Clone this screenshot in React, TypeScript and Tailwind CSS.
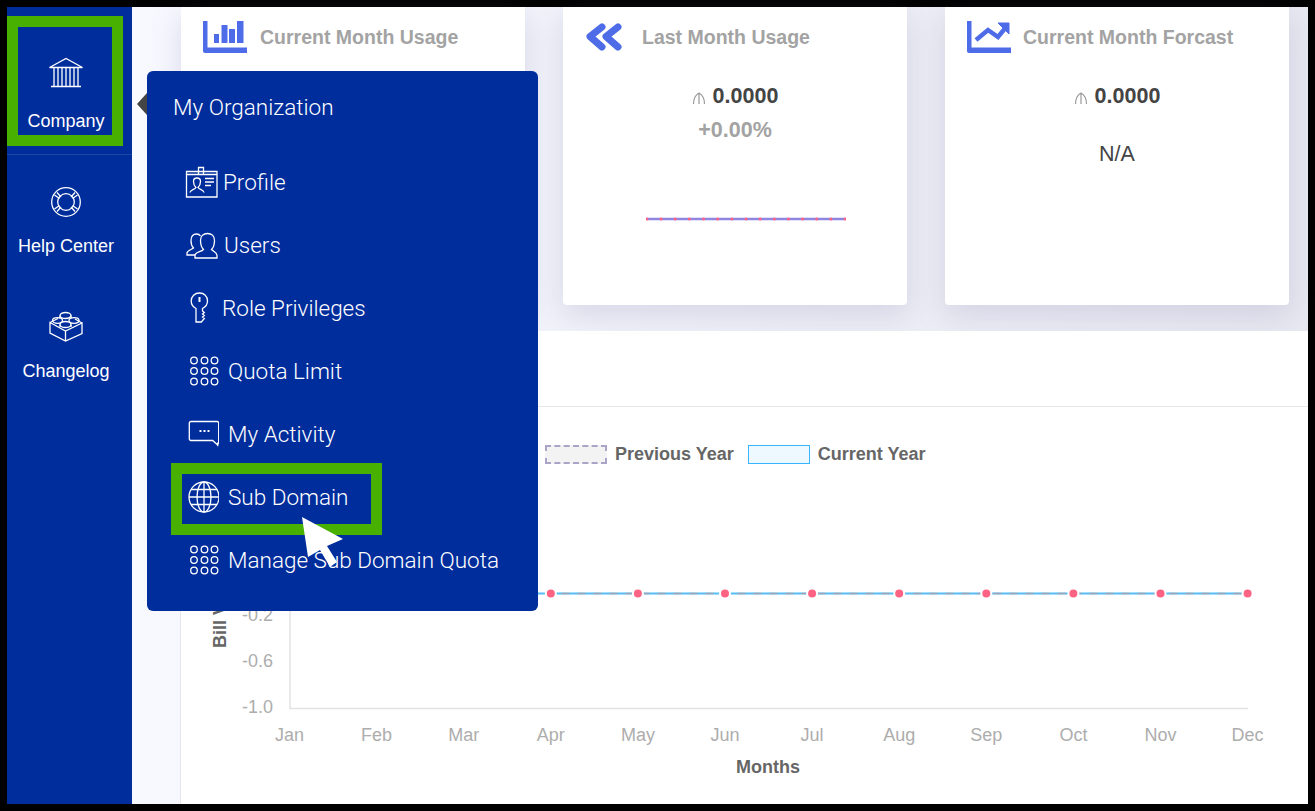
import React from 'react';

const MONTHS = ['Jan', 'Feb', 'Mar', 'Apr', 'May', 'Jun', 'Jul', 'Aug', 'Sep', 'Oct', 'Nov', 'Dec'];
const monthX = (i: number) => 289.5 + i * 87.1;

const stroke = { fill: 'none', stroke: 'white', strokeWidth: 1.3 };

const BankIcon = () => (
  <svg width="36" height="32" viewBox="0 0 36 32" {...stroke}>
    <path d="M1.500 10.500 18 1.500l16.500 9H1.500Z" />
    <path d="M3 29.500h30M6 11v18M10 11v18M14 11v18M18 11v18M22 11v18M26 11v18M30 11v18" />
  </svg>
);

const RingIcon = () => (
  <svg width="32" height="32" viewBox="0 0 32 32" {...stroke}>
    <circle cx="16" cy="16" r="14.3" />
    <circle cx="16" cy="16" r="8.3" />
    <path d="M7 6.500 11 11M25 6.500 21 11M7 25.500 11 21M25 25.500 21 21M4.500 9l5 3.500M27.500 9l-5 3.500M4.500 23l5-3.500M27.500 23l-5-3.500" />
  </svg>
);

const BrickIcon = () => (
  <svg width="36" height="32" viewBox="0 0 36 32" {...stroke}>
    <path d="M2 12.500 17.500 21 34 13v10.500L17.500 31 2 23V12.500ZM17.500 21v10" />
    <path d="M2 12.500 10 8.500M34 13l-7-4" />
    <ellipse cx="17.500" cy="5.500" rx="5.500" ry="3" />
    <path d="M12 5.500v3M23 5.500v3" />
    <ellipse cx="9.500" cy="10.500" rx="5" ry="2.800" />
    <ellipse cx="26" cy="10.500" rx="5" ry="2.800" />
    <ellipse cx="17.500" cy="14.500" rx="5.500" ry="3" />
    <path d="M12 14.500v2.500M23 14.500v2.500" />
  </svg>
);

const ProfileIcon = () => (
  <svg width="34" height="34" viewBox="0 0 34 34" {...stroke}>
    <path d="M1.500 6.500h30.500v25.500H1.500V6.500ZM1.500 9.500h30.500" />
    <path d="M13.500 9.500V2.500h5v7" />
    <path d="M5 27.500c.5-3 5-3 6-5-2-2-2.500-3.500-2.500-6 0-2.300 1.500-3.500 3.500-3.500s3.500 1.200 3.500 3.500c0 2.500-.5 4-2.500 6 1 2 5.500 2 6 5" />
    <path d="M20 13.500h9M20 17h9M20 20.500h6" />
  </svg>
);

const UsersIcon = () => (
  <svg width="34" height="34" viewBox="0 0 34 34" {...stroke}>
    <path d="M10 30v-2.500c0-3.500 6-3.500 8.500-6-2.500-2.500-3-5.500-3-9 0-4.500 3-7 7-7s7 2.500 7 7c0 3.500-.5 6.500-3 9 2.500 2.500 5.500 2.500 5.500 6V30H10Z" />
    <path d="M10 27H2v-2c0-2.500 4-3 6.500-5-2-2-2.500-4.500-2.500-7.500 0-4 2-6.500 5.500-6.500 1.500 0 3 .5 4 2" />
  </svg>
);

const KeyIcon = () => (
  <svg width="34" height="34" viewBox="0 0 34 34" {...stroke}>
    <path d="M11 17.500C7.800 15.800 6.200 13 6.200 10 6.200 5.300 9.800 2 14.500 2s8 3.300 8 8c0 3.200-1.700 5.800-5 7.500v2.500l1.800 1.500-1.800 1.500 1.800 1.500-1.800 1.500 1.800 1.500-3 3.500H11V17.500Z" />
    <path d="M14.500 6v5" strokeWidth="2" />
  </svg>
);

const DotsIcon = () => (
  <svg width="34" height="34" viewBox="0 0 34 34" {...stroke}>
    {[9, 19.5, 30].map(y =>
      [9, 19.5, 29.5].map(x => <circle key={`${x}-${y}`} cx={x} cy={y - 2.5} r="3.300" />)
    )}
  </svg>
);

const ChatIcon = () => (
  <svg width="34" height="34" viewBox="0 0 34 34" {...stroke}>
    <path d="M6 4.500h26c1 0 1.700.7 1.700 1.700v19.800l-1 1.500v-2 2.500l-5-4.500H6c-1 0-1.700-.7-1.700-1.700V6.200C4.300 5.200 5 4.500 6 4.500Z" />
    <path d="M14.500 14h2M18.500 14h2M22.500 14h2" strokeWidth="1.800" />
  </svg>
);

const GlobeIcon = () => (
  <svg width="34" height="34" viewBox="0 0 34 34" {...stroke}>
    <circle cx="19" cy="17" r="15" />
    <ellipse cx="19" cy="17" rx="7" ry="15" />
    <path d="M19 2v30M4 17h30M6 9.500h26M6 24.500h26" />
  </svg>
);

const BarsIcon = () => (
  <svg width="44" height="34" viewBox="0 0 44 34" fill="#4f6ce8">
    <path d="M0 1h4.500v26.500H44V33H2c-1.200 0-2-.8-2-2V1Z" />
    <rect x="11" y="14" width="5" height="9" />
    <rect x="18.500" y="5" width="6" height="18" />
    <rect x="26" y="9" width="6" height="14" />
    <rect x="34" y="1" width="6.500" height="22" />
  </svg>
);

const ChevronsIcon = () => (
  <svg width="38" height="30" viewBox="0 0 38 30" fill="none" stroke="#4f6ce8" strokeWidth="7" strokeLinecap="round" strokeLinejoin="round">
    <path d="M17 5 5 14.500 17 25M33 5 21 14.500 33 25" />
  </svg>
);

const TrendIcon = () => (
  <svg width="44" height="34" viewBox="0 0 44 34" fill="none">
    <path d="M0 1h4.500v26.500H44V33H2c-1.200 0-2-.8-2-2V1Z" fill="#4f6ce8" />
    <path d="M9 20 21 10l10 7 9-11" stroke="#4f6ce8" strokeWidth="4.500" />
    <path d="M31 3h11v11L31 3Z" fill="#4f6ce8" stroke="#4f6ce8" strokeWidth="1" />
  </svg>
);

const CurrencyIcon = () => (
  <svg width="14" height="14" viewBox="0 0 14 14" fill="none" stroke="#9a9a9a" strokeWidth="1.200" className="mr-[7px] mt-[3px]">
    <path d="M1.500 13C1.500 7.500 3.500 4 7 2c3.500 2 5.500 5.500 5.500 11M7 2v11" />
  </svg>
);

const SideItem: React.FC<{ icon: React.ReactNode; label: string; className: string }> = ({ icon, label, className }) => (
  <div className={`flex flex-col items-center pr-[7px] text-white text-[18px] leading-[22px] ${className}`}>
    {icon}
    <span>{label}</span>
  </div>
);

const MENU: { icon: React.ReactNode; label: string; box: string }[] = [
  { icon: <ProfileIcon />, label: 'Profile', box: 'w-[38px]' },
  { icon: <UsersIcon />, label: 'Users', box: 'w-[39px]' },
  { icon: <KeyIcon />, label: 'Role Privileges', box: 'w-[37px]' },
  { icon: <DotsIcon />, label: 'Quota Limit', box: 'w-[43px]' },
  { icon: <ChatIcon />, label: 'My Activity', box: 'w-[43px]' },
  { icon: <GlobeIcon />, label: 'Sub Domain', box: 'w-[43px]' },
  { icon: <DotsIcon />, label: 'Manage Sub Domain Quota', box: 'w-[43px]' },
];

const Card: React.FC<{ icon: React.ReactNode; title: string; gap: string; children?: React.ReactNode }> = ({ icon, title, gap, children }) => (
  <div className="w-[344px] h-[298px] bg-white rounded-b-[4px] shadow-[0_10px_30px_rgba(120,120,170,0.22)] flex flex-col">
    <div className="flex items-center h-[60px] pl-[22px]">
      {icon}
      <span className={`mt-[2px] text-[19.500px] font-bold text-[#a3a3a3] ${gap}`}>{title}</span>
    </div>
    <div className="flex flex-col items-center pt-[16px] text-[21.500px]">{children}</div>
  </div>
);

const Amount = () => (
  <div className="flex items-center h-[26px] font-bold text-[#444444]">
    <CurrencyIcon />
    0.0000
  </div>
);

const Sparkline = () => (
  <svg width="200" height="6" viewBox="0 0 200 6" className="mt-[70px] ml-[22px]">
    <path d="M1 3h198" stroke="#8e86e0" strokeWidth="2.500" />
    {Array.from({ length: 15 }, (_, i) => (
      <circle key={i} cx={1 + (i * 198) / 14} cy="3" r="1.500" fill="#ff6384" />
    ))}
  </svg>
);

const LineChart = () => (
  <svg viewBox="181 480 1127 324" className="w-full h-[324px] block" fontFamily="'Liberation Sans', Arial, sans-serif">
    <path d="M290 480v228.500h958" fill="none" stroke="#e3e3e3" strokeWidth="1.500" />
    <path d="M289.500 593.500h958" stroke="#55bdf5" strokeWidth="2" />
    <path d="M289.500 593.500h958" stroke="#a3a3b5" strokeWidth="1.500" strokeDasharray="8 8" />
    {MONTHS.map((m, i) => (
      <g key={m}>
        <circle cx={monthX(i)} cy="593.500" r="6" fill="white" />
        <circle cx={monthX(i)} cy="593.500" r="4" fill="#ff6384" />
        <text x={monthX(i)} y="741" textAnchor="middle" fontSize="18" fill="#adadad">{m}</text>
      </g>
    ))}
    {[['-0.2', 621], ['-0.6', 667], ['-1.0', 712.5]].map(([t, y]) => (
      <text key={t} x="273" y={y} textAnchor="end" fontSize="18" fill="#adadad">{t}</text>
    ))}
    <text x="768" y="773" textAnchor="middle" fontSize="18" fontWeight="700" fill="#666666">Months</text>
    <text x="226" y="648" fontSize="18" fontWeight="700" fill="#666666" transform="rotate(-90 226 648)">Bill Value</text>
  </svg>
);

const App: React.FC = () => {
  return (
    <div className="relative w-[1315px] h-[811px] bg-black p-[7px] overflow-hidden font-['Liberation_Sans',Arial,sans-serif]">
      <div className="flex h-full">
        {/* sidebar */}
        <div className="w-[125px] shrink-0 bg-[#002d9c] flex flex-col">
          <SideItem icon={<BankIcon />} label="Company" className="h-[148px] pt-[50px] gap-[21px] border-b border-[#1c469f]" />
          <SideItem icon={<RingIcon />} label="Help Center" className="h-[125px] pt-[31px] gap-[17px]" />
          <SideItem icon={<BrickIcon />} label="Changelog" className="h-[125px] pt-[30px] gap-[18px]" />
        </div>

        {/* main */}
        <div className="flex-1 pl-[49px] flex flex-col bg-gradient-to-r from-[#f8f8ff] to-[#e8e8f1]">
          <div className="flex gap-[38px]">
            <Card icon={<BarsIcon />} title="Current Month Usage" gap="ml-[13px]">
              <Amount />
            </Card>
            <Card icon={<ChevronsIcon />} title="Last Month Usage" gap="ml-[19px]">
              <Amount />
              <div className="mt-[5px] font-bold text-[#a3a3a3]">+0.00%</div>
              <Sparkline />
            </Card>
            <Card icon={<TrendIcon />} title="Current Month Forcast" gap="ml-[12px]">
              <Amount />
              <div className="mt-[29px] text-[#444444]">N/A</div>
            </Card>
          </div>

          <div className="mt-[26px] flex-1 bg-white shadow-[-1px_0_0_#e6e6ee]">
            <div className="h-[76px] border-b border-[#e8e8e8]" />
            <div className="flex items-start h-[73px] pl-[364px] pt-[38px] text-[18px] leading-[19px] font-bold text-[#666666]">
              <div className="w-[62px] h-[19px] bg-[#f3f3f3] border-2 border-dashed border-[#a9a5c6]" />
              <span className="ml-[8px]">Previous Year</span>
              <div className="ml-[14px] w-[62px] h-[19px] bg-[#eef9ff] border border-[#37b6ff]" />
              <span className="ml-[8px]">Current Year</span>
            </div>
            <LineChart />
          </div>
        </div>
      </div>

      {/* popup menu */}
      <div className="absolute left-[137px] top-[93px] w-0 h-0 border-y-[11px] border-y-transparent border-r-[10px] border-r-[#444444]" />
      <div className="absolute left-[147px] top-[71px] w-[391px] h-[540px] bg-[#002d9c] rounded-[6px] text-white font-['Roboto',sans-serif] font-light text-[22.500px]">
        <div className="pl-[26px] pt-[19px] h-[79.500px] leading-[35px]">My Organization</div>
        <div className="pl-[38px]">
          {MENU.map(item => (
            <div key={item.label} className="flex items-center h-[63px]">
              <div className={`${item.box} shrink-0 flex items-center`}>{item.icon}</div>
              <span className="mt-[1px]">{item.label}</span>
            </div>
          ))}
        </div>
      </div>

      {/* green highlights */}
      <div className="absolute left-[7px] top-[16px] w-[116px] h-[130px] border-[11px] border-[#47b000]" />
      <div className="absolute left-[171px] top-[463px] w-[211px] h-[72px] border-[11px] border-[#47b000]" />

      {/* cursor */}
      <svg className="absolute left-[295px] top-[510px]" width="60" height="66" viewBox="0 0 60 66">
        <path d="M7 7 48 29 32 36 42 52 35 57 25 40 13 47 7 7Z" fill="white" />
      </svg>
    </div>
  );
};

export default App;
